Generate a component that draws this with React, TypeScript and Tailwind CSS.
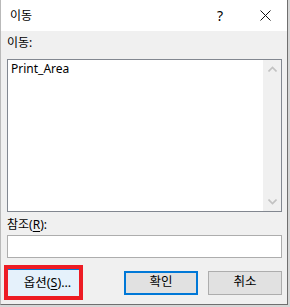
import { ReactNode } from 'react'

const font = { fontFamily: '"Segoe UI", "Noto Sans", "Noto Sans CJK KR", sans-serif' }

function Chevron({ up }: { up?: boolean }) {
  return (
    <svg width="9" height="6" viewBox="0 0 9 6" className="text-[#c2c2c2]">
      <path
        d={up ? 'M0.5 5.5 L4.5 1.5 L8.5 5.5' : 'M0.5 0.5 L4.5 4.5 L8.5 0.5'}
        fill="none"
        stroke="currentColor"
        strokeWidth="1.6"
      />
    </svg>
  )
}

function WinButton({ children, focused }: { children: ReactNode; focused?: boolean }) {
  return (
    <div
      className={`flex items-center justify-center w-[74px] h-[24px] bg-[#e1e1e1] text-[12.5px] text-black ${
        focused ? 'border-2 border-[#0078d7]' : 'border border-[#adadad]'
      }`}
    >
      {children}
    </div>
  )
}

export default function App() {
  return (
    <div className="w-[290px] h-[307px] bg-[#d6d6d6]" style={font}>
      <div className="w-[288px] h-[305px] flex flex-col bg-[#f0f0f0] border-l border-[#b9b9b9] border-r border-b border-r-[#6f6f6f] border-b-[#6f6f6f]">
        {/* title bar */}
        <div className="h-[31px] bg-white flex items-center shrink-0">
          <span className="ml-[9px] text-[12px] text-black">이동</span>
          <span className="ml-auto mr-[37px] text-[14px] text-black">?</span>
          <svg width="11" height="11" viewBox="0 0 11 11" className="mr-[16px]">
            <path d="M0.5 0.5 L10.5 10.5 M10.5 0.5 L0.5 10.5" stroke="#111" strokeWidth="1" />
          </svg>
        </div>

        <div className="flex flex-col pl-[6px] pr-[5px]">
          <div className="mt-[4px] h-[16px] leading-[16px] text-[12px] text-black">이동:</div>

          {/* list box */}
          <div className="mt-[8px] h-[153px] flex border border-[#828790] bg-white">
            <div className="flex-1 pl-[3px] pt-[1px] text-[12px] leading-[16px] text-black">Print_Area</div>
            <div className="w-[18px] bg-[#f0f0f0] flex flex-col items-center justify-between py-[6px]">
              <Chevron up />
              <Chevron />
            </div>
          </div>

          <div className="mt-[5px] h-[16px] leading-[16px] text-[12px] text-black">
            참조(<span className="underline underline-offset-2">R</span>):
          </div>

          <div className="mt-[2px] h-[23px] border border-[#adadad] bg-white" />
        </div>

        {/* buttons */}
        <div className="mt-[7px] flex items-center pl-[3px] pr-[5px]">
          <div className="w-[79px] h-[35px] border-4 border-[#ed1c24] flex">
            <div className="flex-1 border-t border-[#0078d7] bg-[#e5f1fb] flex items-center justify-center pl-[8px] text-[12.5px] text-black">
              옵션(<span className="underline underline-offset-2">S</span>)...
            </div>
          </div>
          <div className="ml-auto flex gap-[10px]">
            <WinButton focused>확인</WinButton>
            <WinButton>취소</WinButton>
          </div>
        </div>
      </div>
    </div>
  )
}
